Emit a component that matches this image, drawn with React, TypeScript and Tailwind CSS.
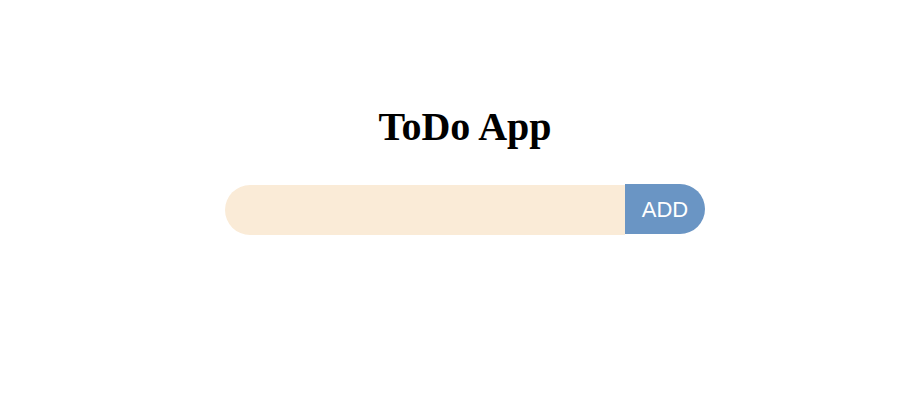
import React from "react";

export default function App() {
  return (
    <div className="w-[905px] h-[401px] bg-white pl-[25px] flex flex-col items-center">
      <h1 className="mt-[104px] text-[40px] leading-[46px] font-bold text-black font-['Liberation_Serif','Times_New_Roman',serif]">
        ToDo App
      </h1>
      <div className="mt-[34px] flex items-start font-['Liberation_Sans',Arial,sans-serif]">
        <input className="mt-px w-[400px] h-[50px] bg-[#faebd7] rounded-l-[25px] outline-none px-5" />
        <button className="w-[80px] h-[50px] bg-[#6a95c4] text-white text-[22px] rounded-r-[25px]">
          ADD
        </button>
      </div>
    </div>
  );
}
